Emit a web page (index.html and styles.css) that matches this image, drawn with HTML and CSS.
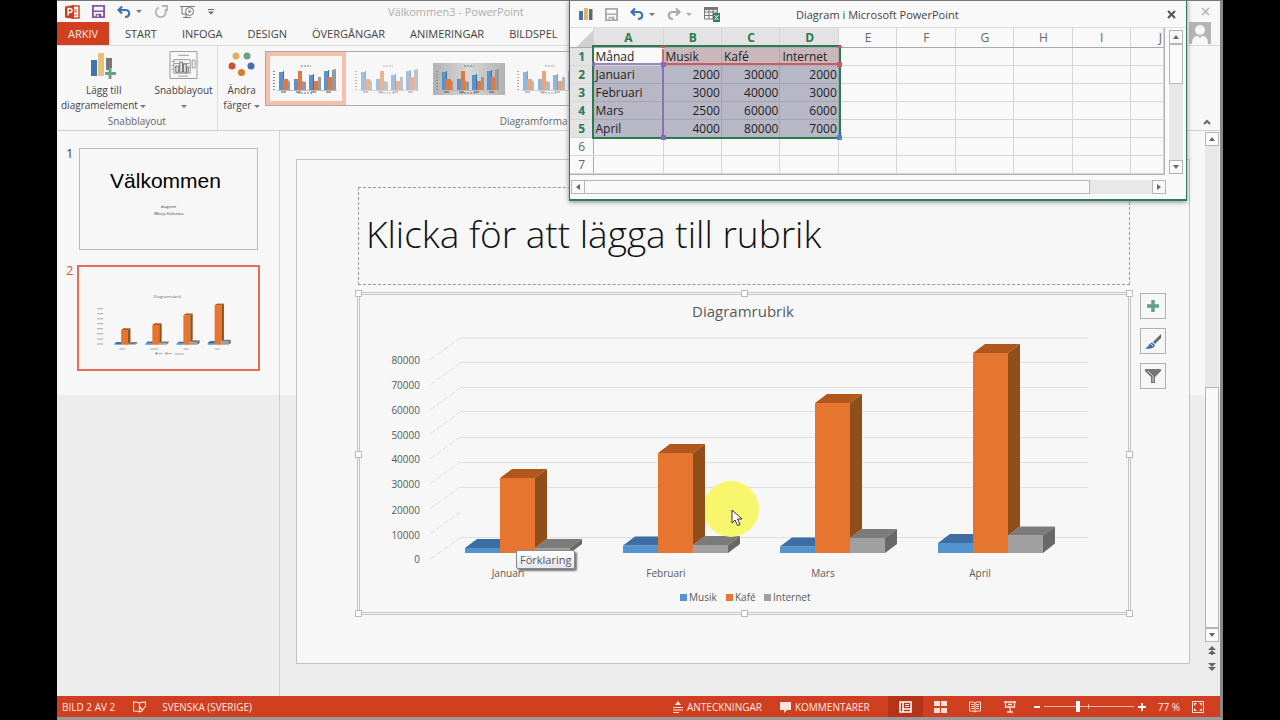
FILE: index.html
```html
<!DOCTYPE html>
<html lang="sv">
<head>
<meta charset="utf-8">
<title>Välkommen3 - PowerPoint</title>
<link rel="stylesheet" href="styles.css">
</head>
<body>
<svg class="defs" aria-hidden="true">
  <symbol id="undo" viewBox="0 0 14 14"><path d="M5 1.500L1.500 5 5 8.500M2 5h6.500c5 0 5 7-.5 7" fill="none" stroke="currentColor" stroke-width="2.200"/></symbol>
  <symbol id="save" viewBox="0 0 14 14"><path d="M1 1h12v12H1z" fill="none" stroke="currentColor" stroke-width="2"/><path d="M1 6h12v1.500H1zM4 9.500h6V13H4z" fill="currentColor"/><path d="M5.500 10.500h1.500V13H5.500z" fill="#f7f7f7"/></symbol>
  <symbol id="minichart" viewBox="0 0 72 32">
    <path d="M31 3h10M28 30h15" stroke="#777" stroke-dasharray="2 1"/><path d="M4 8v19" stroke="#888" stroke-width="2" stroke-dasharray="1 2"/>
    <path d="M7 27.500h60" stroke="#bbb"/>
    <path class="c1" d="M9 9h4v18H9zM24 16h4v11h-4zM39 12h4v15h-4zM54 8h4v19h-4z"/>
    <path class="d1" d="M13 8h1v19h-1zM28 15h1v12h-1zM43 11h1v16h-1zM58 7h1v20h-1z"/>
    <path class="c2" d="M13 16h5v11h-5zM28 8h4v19h-4zM44 18h4v9h-4zM58 14h4v13h-4z"/>
    <path class="c3" d="M18 17l2 2v8h-2zM32 18l4 1v8h-4zM48 14h3v13h-3zM62 7l4-1v21h-4z"/>
    <path d="M11 29h5M26 29h5M41 29h5M56 29h5" stroke="#555"/>
  </symbol>
  <symbol id="chartbars" viewBox="465 344 590 210">
    <g fill="#5294d0"><path d="M465 548h35v5h-35zM623 545.500h35v7.500h-35zM780 546.500h35v6.500h-35zM938 543h35v10h-35z"/></g>
    <g fill="#3c6da3"><path d="M465 548l12-9h35v9zM623 545.500l12-9h35v9zM780 546.500l12-9h35v9zM938 543l12-9h35v9z"/></g>
    <g fill="#a0a0a0"><path d="M535 548h35v5h-35zM693 545h35v8h-35zM850 538h35v15h-35zM1008 535.500h35v17.500h-35z"/></g>
    <g fill="#7b7b7b"><path d="M535 548l12-9h35l-12 9zM693 545l12-9h35l-12 9zM850 538l12-9h35l-12 9zM1008 535.500l12-9h35l-12 9z"/></g>
    <g fill="#686868"><path d="M570 548l12-9v5l-12 9zM728 545l12-9v8l-12 9zM885 538l12-9v15l-12 9zM1043 535.500l12-9v17l-12 9.500z"/></g>
    <g fill="#e6752f"><path d="M500 478h35v75h-35zM658 453h35v100h-35zM815 403h35v150h-35zM973 353h35v200h-35z"/></g>
    <g fill="#b1571c"><path d="M500 478l12-9h35l-12 9zM658 453l12-9h35l-12 9zM815 403l12-9h35l-12 9zM973 353l12-9h35l-12 9z"/></g>
    <g fill="#904f1a"><path d="M535 478l12-9v70l-12 9zM693 453l12-9v92l-12 9zM850 403l12-9v135l-12 9zM1008 353l12-9v182.500l-12 9z"/></g>
  </symbol>
</svg>

<div class="app">
  <header class="titlebar">
    <div class="quick">
      <svg width="16" height="16" viewBox="0 0 16 16"><path d="M9 2h6v12H9z" fill="#fff" stroke="#cf4527" stroke-width="1.500"/><path d="M10 6h3M10 8h3M10 11h3" stroke="#cf4527"/><path d="M1 2.500L10 1v14L1 13.500z" fill="#cf3d1e"/><path d="M4.200 11.500V4.500h1.500c3 0 3 4 0 4H4.500" fill="none" stroke="#fff" stroke-width="1.500"/></svg>
      <button aria-label="Spara" class="purple"><svg width="13" height="13"><use href="#save"/></svg></button>
      <button aria-label="Ångra" class="blue"><svg width="14" height="14"><use href="#undo"/></svg><i class="caret"></i></button>
      <button aria-label="Gör om"><svg width="14" height="14" viewBox="0 0 14 14"><path d="M5 2.500a5 5 0 1 0 6 2M8 1h5v5" fill="none" stroke="#b3b3b3" stroke-width="1.800"/></svg></button>
      <button aria-label="Starta bildspel"><svg width="16" height="14" viewBox="0 0 16 14"><path d="M0 1.500h15M2 2v7h5M6 9v3.500M3 12.500h8" fill="none" stroke="#777"/><circle cx="9.500" cy="6.500" r="4" fill="#f7f7f7" stroke="#777"/><path d="M8.500 4.500v4l3-2z" fill="#6c9b88"/></svg></button>
      <button aria-label="Anpassa"><svg width="6" height="6" viewBox="0 0 6 6"><path d="M0 .5h6" stroke="#666"/><path d="M0 2.500h6L3 5.500z" fill="#666"/></svg></button>
    </div>
    <h1>Välkommen3 - PowerPoint</h1>
    <button class="close" aria-label="Stäng"><svg width="9" height="9" viewBox="0 0 9 9"><path d="M1 1l7 7M8 1L1 8" stroke="#b5b5b5" stroke-width="1.600"/></svg></button>
  </header>

  <nav class="tabs">
    <button class="file">ARKIV</button>
    <button>START</button><button>INFOGA</button><button>DESIGN</button><button>ÖVERGÅNGAR</button><button>ANIMERINGAR</button><button>BILDSPEL</button>
    <svg class="avatar" width="22" height="22" viewBox="0 0 22 22"><path d="M0 0h22v22H0z" fill="#b4b4b4"/><circle cx="11" cy="8" r="5" fill="#f7f7f7"/><path d="M3 22c0-7 3-8 6-8l2 2 2-2c3 0 6 1 6 8z" fill="#f7f7f7"/></svg>
  </nav>

  <section class="ribbon">
    <div class="group">
      <div class="tools">
        <button class="tool">
          <svg width="27" height="28" viewBox="0 0 27 28"><path d="M1 9h6v16H1z" fill="#4273b1"/><path d="M8 2h6v23H8z" fill="#e6c27a"/><path d="M16 7h6v10h-2v2h-4z" fill="#777"/><path d="M20 17v11M15 22.500h11" stroke="#6aa288" stroke-width="3"/></svg>
          <span>Lägg till<br>diagramelement <i class="caret"></i></span>
        </button>
        <button class="tool">
          <svg width="29" height="28" viewBox="0 0 29 29"><path d="M.5.500h28v28H.500zM4.500 9h17v14h-17zM23.500 9.500h3v8h-3z" fill="#f7f7f7" stroke="#999"/><path d="M9 4.500h11M9 26h10M2 11h2M2 15h2M2 19h2M5 13h16M5 17h16" stroke="#999"/><path d="M6.500 15.500h3V22h-3zM10.500 11.500h3V22h-3zM14.500 13.500h3V22h-3zM17.500 16.500h2V22h-2z" fill="#ddd" stroke="#777"/></svg>
          <span>Snabblayout<br><i class="caret"></i></span>
        </button>
      </div>
      <div class="caption">Snabblayout</div>
    </div>
    <div class="group styles">
      <div class="tools">
        <button class="tool">
          <svg width="27" height="28" viewBox="0 0 27 28"><circle cx="8" cy="5" r="3.500" fill="#deb060"/><circle cx="19" cy="5" r="3.500" fill="#6aa28c"/><circle cx="4" cy="15" r="3.500" fill="#cc5036"/><circle cx="23" cy="15" r="3.500" fill="#446fac"/><circle cx="13.500" cy="21.500" r="3.500" fill="#dd762e"/></svg>
          <span>Ändra<br>färger <i class="caret"></i></span>
        </button>
        <div class="gallery">
          <button class="selected" aria-label="Format 1"><svg width="72" height="32"><use href="#minichart"/></svg></button>
          <button class="light" aria-label="Format 2"><svg width="72" height="32"><use href="#minichart"/></svg></button>
          <button class="gray" aria-label="Format 3"><svg width="72" height="32"><use href="#minichart"/></svg></button>
          <button class="pale" aria-label="Format 4"><svg width="72" height="32"><use href="#minichart"/></svg></button>
        </div>
      </div>
      <div class="caption">Diagramforma</div>
    </div>
    <button class="collapse" aria-label="Komprimera menyfliksområdet"><svg width="8" height="6" viewBox="0 0 8 6"><path d="M1 5l3-3 3 3" fill="none" stroke="#666" stroke-width="2"/></svg></button>
  </section>

  <main class="work">
    <aside class="slides">
      <div class="item"><span>1</span>
        <div class="thumb"><strong>Välkommen</strong><small>diagram</small><small>/Marja Källenius</small></div>
      </div>
      <div class="item active"><span>2</span>
        <div class="thumb">
          <svg viewBox="0 0 178 100">
            <use href="#chartbars" x="35" y="36" width="116" height="42"/>
            <path d="M21 41v40" stroke="#aaa" stroke-width="6" stroke-dasharray="1 4"/>
            <path d="M40 81.500h6M71 81.500h8M104 81.500h5M135 81.500h5M95 86.500h9" stroke="#aaa"/>
            <path d="M76 85h2v2h-2z" fill="#5294d0"/><path d="M86 85h2v2h-2z" fill="#e6752f"/><path d="M79 86h4M89 86h3" stroke="#aaa"/>
            <text x="88" y="31" text-anchor="middle">Diagramrubrik</text>
          </svg>
        </div>
      </div>
    </aside>

    <div class="canvas">
      <article class="slide">
        <h2>Klicka för att lägga till rubrik</h2>
        <div class="chart">
          <svg viewBox="358 293 772 321" role="img" aria-label="Diagramrubrik">
            <path d="M460 338h628M460 362.500h628M460 387.500h628M460 411.500h628M460 437.500h628M460 462.500h628M460 487.500h628M460 537.500h628" stroke="#dedede"/>
            <path d="M430 360l30-22M430 385l30-22M430 410l30-22M430 434l30-22M430 459l30-22M430 484l30-22M430 509l30-22M430 534l30-22M430 559l30-21" stroke="#dcdcdc" stroke-dasharray="6 2"/>
            <use href="#chartbars" x="465" y="344" width="590" height="210"/>
            <text class="title" x="743" y="317" text-anchor="middle">Diagramrubrik</text>
            <g class="axis" text-anchor="end">
              <text x="420" y="364">80000</text><text x="420" y="389">70000</text><text x="420" y="414">60000</text><text x="420" y="439">50000</text><text x="420" y="463">40000</text><text x="420" y="488">30000</text><text x="420" y="514">20000</text><text x="420" y="539">10000</text><text x="420" y="563">0</text>
            </g>
            <g class="axis" text-anchor="middle">
              <text x="508" y="577">Januari</text><text x="666" y="577">Februari</text><text x="823" y="577">Mars</text><text x="980" y="577">April</text>
            </g>
            <path d="M680 594h7v7h-7z" fill="#5294d0"/><path d="M726 594h7v7h-7z" fill="#e6752f"/><path d="M764 594h7v7h-7z" fill="#a0a0a0"/>
            <g class="axis"><text x="689" y="601">Musik</text><text x="735" y="601">Kafé</text><text x="773" y="601">Internet</text></g>
          </svg>
          <i class="handle nw"></i><i class="handle n"></i><i class="handle ne"></i><i class="handle w"></i><i class="handle e"></i><i class="handle sw"></i><i class="handle s"></i><i class="handle se"></i>
          <div class="tip" role="tooltip">Förklaring</div>
          <div class="spot"></div>
          <svg class="pointer" width="12" height="18" viewBox="0 0 12 18"><path d="M1 1v13l3-3 2.500 5.500 2.500-1L6.500 10H11z" fill="#fff" stroke="#333"/></svg>
          <div class="side">
            <button aria-label="Diagramelement"><svg width="14" height="14" viewBox="0 0 14 14"><path d="M7 1v12M1 7h12" stroke="#62a184" stroke-width="3.500"/></svg></button>
            <button aria-label="Diagramformat"><svg width="18" height="17" viewBox="0 0 18 17"><path d="M17 1v4l-6 6-2-2z" fill="#686868"/><path d="M8 9.500l3 2.500c-1 4-6 4-10 3.500 3-1 4-5 7-6z" fill="#3f72b0"/><path d="M7 11l2 2" stroke="#fff"/></svg></button>
            <button aria-label="Diagramfilter"><svg width="18" height="16" viewBox="0 0 18 16"><path d="M1 1h16v2l-6 6v6H7V9L1 3z" fill="#777"/><path d="M4 3l5 5v6" stroke="#ccc" fill="none"/></svg></button>
          </div>
        </div>
      </article>
    </div>

    <div class="vscroll">
      <button aria-label="Upp"><i class="up"></i></button>
      <div class="track"><div class="knob"></div></div>
      <button aria-label="Ned"><i class="down"></i></button>
      <button class="bare" aria-label="Föregående bild"><svg width="8" height="9" viewBox="0 0 8 9"><path d="M0 4l4-4 4 4zM0 8l4-4 4 4zM3 8h2v1H3z" fill="#666"/></svg></button>
      <button class="bare" aria-label="Nästa bild"><svg width="8" height="9" viewBox="0 0 8 9"><path d="M0 1h8L4 5zM0 5h8L4 9z" fill="#666"/></svg></button>
    </div>
  </main>

  <footer class="status">
    <span>BILD 2 AV 2</span>
    <svg width="14" height="12" viewBox="0 0 14 12"><path d="M6.500 10.500V2C5 1 3 1 .5 1v9c3 0 5 0 6 1 1-1 2-1 3-1M6.500 2c1.500-1 3-1 6-1v3M7 6l2.500 3L13 4.500" fill="none" stroke="#fbe3dc" stroke-width="1.200"/></svg>
    <span class="lang">SVENSKA (SVERIGE)</span>
    <button class="notes"><svg width="10" height="12" viewBox="0 0 10 12"><path d="M2 4l3-4 3 4zM0 6h10v1H0zM0 8.500h10v1H0zM0 11h6v1H0z" fill="#fbe3dc"/></svg>ANTECKNINGAR</button>
    <button class="comments"><svg width="11" height="12" viewBox="0 0 11 12"><path d="M0 1h11v8H7l-3 3V9H0z" fill="#fbe3dc"/></svg>KOMMENTARER</button>
    <div class="views">
      <button class="on" aria-label="Normal"><svg width="13" height="12" viewBox="0 0 13 12"><path d="M1 1h11v10H1zM4 1v10M4 8h8" fill="none" stroke="#fff" stroke-width="1.500"/><path d="M6 3.500h4M6 5.500h4" stroke="#fff"/></svg></button>
      <button aria-label="Bildsortering"><svg width="13" height="12" viewBox="0 0 13 12"><path d="M0 0h6v5H0zM7 0h6v5H7zM0 7h6v5H0zM7 7h6v5H7z" fill="#fbe3dc"/></svg></button>
      <button aria-label="Läsvy"><svg width="12" height="12" viewBox="0 0 12 12"><path d="M6 2v9M.500 1C3 1 5 1 6 2c1-1 3-1 5.500-1v9C9 10 7 10 6 11 5 10 3 10 .500 10zM2 3.500h3M2 5.500h3M2 7.500h3M7 3.500h3M7 5.500h3M7 7.500h3" fill="none" stroke="#fbe3dc"/></svg></button>
      <button aria-label="Bildspel"><svg width="12" height="12" viewBox="0 0 12 12"><path d="M0 1h12M1.500 1v5h9V1M6 6v5M3 11h6M4 3.500h4" fill="none" stroke="#fbe3dc" stroke-width="1.300"/></svg></button>
    </div>
    <div class="zoom">
      <button aria-label="Zooma ut"><svg width="6" height="10" viewBox="0 0 6 10"><path d="M0 5h6" stroke="#fff" stroke-width="2"/></svg></button>
      <input type="range" min="0" max="100" value="38" aria-label="Zoom">
      <button aria-label="Zooma in"><svg width="8" height="10" viewBox="0 0 8 10"><path d="M0 5h8M4 1v8" stroke="#fff" stroke-width="1.800"/></svg></button>
    </div>
    <span>77 %</span>
    <button aria-label="Anpassa till fönster"><svg width="12" height="12" viewBox="0 0 12 12"><path d="M.5.500h11v11H.500z" fill="none" stroke="#fbe3dc"/><path d="M2 5V2h3zM7 2h3v3zM2 7v3h3zM10 7v3H7z" fill="#fbe3dc"/></svg></button>
  </footer>
</div>

<section class="sheet" aria-label="Diagram i Microsoft PowerPoint">
  <header>
    <svg width="14" height="14" viewBox="0 0 14 14"><path d="M0 4h4v9H0z" fill="#4273b1"/><path d="M5 1h4v12H5z" fill="#deb566"/><path d="M10 2h3.500v11H10z" fill="#666"/></svg>
    <button aria-label="Spara" class="dim"><svg width="13" height="13"><use href="#save"/></svg></button>
    <button aria-label="Ångra" class="blue"><svg width="14" height="14"><use href="#undo"/></svg><i class="caret"></i></button>
    <button aria-label="Gör om" class="dim"><svg class="flip" width="14" height="14"><use href="#undo"/></svg><i class="caret"></i></button>
    <button aria-label="Redigera data i Excel"><svg width="16" height="15" viewBox="0 0 16 15"><path d="M.500 1h13v11H.500zM.500 5h13M.500 8.500h13M5 2v10M9 2v10" fill="none" stroke="#777"/><path d="M0 0h14v3H0z" fill="#777"/><path d="M9 6h7v9H9z" fill="#2d8659"/><path d="M10.500 8l4 5M14.500 8l-4 5" stroke="#fff"/></svg></button>
    <h2>Diagram i Microsoft PowerPoint</h2>
    <button class="close" aria-label="Stäng"><svg width="9" height="9" viewBox="0 0 9 9"><path d="M1 1l7 7M8 1L1 8" stroke="#555" stroke-width="2"/></svg></button>
  </header>
  <div class="grid">
    <div class="cells">
      <table>
        <colgroup><col class="rowhead"><col class="first"><col><col><col><col><col><col><col><col><col class="last"></colgroup>
        <thead><tr><th class="corner"></th><th class="hot">A</th><th class="hot">B</th><th class="hot">C</th><th class="hot">D</th><th>E</th><th>F</th><th>G</th><th>H</th><th>I</th><th class="cut">J</th></tr></thead>
        <tbody>
          <tr><th class="hot">1</th><td>Månad</td><td class="ser">Musik</td><td class="ser">Kafé</td><td class="ser">Internet</td><td></td><td></td><td></td><td></td><td></td><td></td></tr>
          <tr><th class="hot">2</th><td class="sel">Januari</td><td class="sel num">2000</td><td class="sel num">30000</td><td class="sel num">2000</td><td></td><td></td><td></td><td></td><td></td><td></td></tr>
          <tr><th class="hot">3</th><td class="sel">Februari</td><td class="sel num">3000</td><td class="sel num">40000</td><td class="sel num">3000</td><td></td><td></td><td></td><td></td><td></td><td></td></tr>
          <tr><th class="hot">4</th><td class="sel">Mars</td><td class="sel num">2500</td><td class="sel num">60000</td><td class="sel num">6000</td><td></td><td></td><td></td><td></td><td></td><td></td></tr>
          <tr><th class="hot">5</th><td class="sel">April</td><td class="sel num">4000</td><td class="sel num">80000</td><td class="sel num">7000</td><td></td><td></td><td></td><td></td><td></td><td></td></tr>
          <tr><th>6</th><td></td><td></td><td></td><td></td><td></td><td></td><td></td><td></td><td></td><td></td></tr>
          <tr><th>7</th><td></td><td></td><td></td><td></td><td></td><td></td><td></td><td></td><td></td><td></td></tr>
        </tbody>
      </table>
      <svg class="marks" width="252" height="98" viewBox="590 43 252 98">
        <path d="M593 46h247v92H593z" fill="none" stroke="#2c7a50" stroke-width="2"/>
        <path d="M594 64h69v73" fill="none" stroke="#7f5fb0" stroke-width="1.500"/>
        <path d="M663 49v15h176" fill="none" stroke="#c2424e" stroke-width="1.500"/>
        <path d="M661 46h4v2h-4zM837 46h5v2h-5zM837 62h5v5h-5z" fill="#dd5363"/>
        <path d="M661 62h5v5h-5zM661 135h5v5h-5zM592 62h3v4h-3z" fill="#8a68c0"/><path d="M837 135h5v5h-5z" fill="#4f82d4"/>
      </svg>
    </div>
    <div class="sv">
      <button aria-label="Upp"><i class="up"></i></button>
      <div class="track"><div class="knob"></div></div>
      <button aria-label="Ned"><i class="down"></i></button>
    </div>
  </div>
  <div class="sh">
    <button aria-label="Vänster"><i class="left"></i></button>
    <div class="track"><div class="knob"></div></div>
    <button aria-label="Höger"><i class="right"></i></button>
  </div>
</section>
</body>
</html>
```
FILE: styles.css
```css
* { box-sizing: border-box; }
body { margin: 0; position: relative; min-height: 100vh; padding: 0 57px; background: #000; color: #444; font-family: "Open Sans", "Noto Sans", sans-serif; font-size: 11px; }
button { margin: 0; padding: 0; border: 0; background: none; color: inherit; font: inherit; }
h1, h2 { margin: 0; font-weight: 400; }
svg { display: block; }
.defs { position: absolute; width: 0; height: 0; }
.app { display: flex; flex-direction: column; min-height: 100vh; background: #f7f7f7; border-top: 1px solid #777; border-bottom: 3px solid #999; border-right: 3px solid #888; }
.caret { display: inline-block; border: 3px solid transparent; border-top-color: #777; border-bottom: 0; vertical-align: middle; }

.titlebar { display: flex; align-items: center; height: 21px; padding-right: 10px; }
.quick { display: flex; align-items: center; gap: 12px; width: 331px; padding-left: 7px; }
.quick button, .sheet header button { display: flex; align-items: center; gap: 5px; }
.purple { color: #8455a3; }
.blue { color: #3e71ae; }
.dim { color: #aaa; }
.dim .caret { border-top-color: #aaa; }
.titlebar h1 { flex: 1; color: #adadad; font-size: 11px; }

.tabs { display: flex; align-items: stretch; gap: 25px; height: 24px; border-bottom: 1px solid #d9d9d9; font-size: 11px; }
.tabs .file { width: 52px; margin-right: -9px; background: #d04020; color: #fbe8e2; }
.avatar { margin-left: auto; margin-right: 9px; }

.ribbon { position: relative; display: flex; height: 85px; border-bottom: 1px solid #cfcfcf; font-size: 10px; line-height: 15px; }
.group { display: flex; flex-direction: column; justify-content: space-between; padding: 5px 4px 1px; border-right: 1px solid #ddd; }
.tools { display: flex; gap: 8px; }
.tool { display: flex; flex-direction: column; align-items: center; gap: 4px; white-space: nowrap; }
.caption { text-align: center; color: #666; }
.styles { flex: 1; border: 0; }
.styles .tools { gap: 3px; }
.styles .tool { width: 40px; }
.styles .caption { padding-left: 278px; text-align: left; }
.gallery { flex: 1; display: flex; gap: 3px; height: 55px; margin-right: 93px; overflow: hidden; border: 1px solid #aaa; border-right: 0; }
.gallery button { display: grid; place-items: center; flex: none; width: 78px; }
.gallery .selected { width: 80px; border: 4px solid #f4bfab; }
.gallery .gray svg { background: linear-gradient(90deg, #b2b2b2, #d8d8d8, #b2b2b2); }
.c1 { fill: #5b92cb; } .d1 { fill: #3f6ea3; } .c2 { fill: #e07840; } .c3 { fill: #999; }
.light svg { opacity: 0.55; }
.pale svg { opacity: 0.65; }
.collapse { position: absolute; right: 9px; bottom: 5px; }

.work { flex: 1; display: flex; background: linear-gradient(#f7f7f7 264px, #ededed 264px); }
.slides { width: 223px; padding: 17px 21px 0 9px; border-right: 1px solid #d2d2d2; display: flex; flex-direction: column; gap: 15px; }
.item { display: flex; gap: 5px; font-size: 13px; line-height: 10px; }
.item > span { width: 8px; }
.thumb { flex: 1; display: flex; flex-direction: column; align-items: center; height: 102px; border: 1px solid #bbb; background: #f7f7f7; color: #333; }
.thumb strong { margin: 20px 0 10px; padding-right: 6px; font: 400 21px/24px "Liberation Sans", sans-serif; color: #000; }
.thumb small { font-size: 4px; line-height: 7px; }
.active { color: #dd5a3c; gap: 3px; margin-right: -2px; }
.active .thumb { height: 106px; border: 2px solid #e86c52; }
.thumb svg { width: 100%; }
.thumb text { font-size: 4px; fill: #666; }

.canvas { flex: 1; padding: 28px 15px 32px 16px; }
.slide { padding: 27px 59px 49px 61px; border: 1px solid #c4c4c4; background: #f7f7f7; }
.slide h2 { margin-bottom: 8px; padding: 0 7px 4px; border: 1px dashed #999; color: #111; font: 300 37px/92px "Open Sans", sans-serif; white-space: nowrap; }
.chart { position: relative; outline: 3px double #c4c4c4; outline-offset: -2px; }
.chart > svg:first-child { width: 100%; }
.title { font-size: 15px; fill: #595959; }
.axis { font-size: 10px; fill: #595959; }
.handle { position: absolute; width: 7px; height: 7px; margin: -3px; border: 1px solid #bbb; background: #fff; }
.nw, .n, .ne { top: 0; } .sw, .s, .se { bottom: 0; } .w, .e { top: 50%; }
.nw, .w, .sw { left: 0; } .ne, .e, .se { right: 0; } .n, .s { left: 50%; }
.tip { position: absolute; left: 158px; top: 257px; padding: 0 3px; border: 1px solid #888; border-radius: 2px; background: linear-gradient(#fff, #e6e6f0); box-shadow: 2px 2px 2px #777; font-size: 11px; line-height: 17px; color: #555; }
.spot { position: absolute; left: 345px; top: 188px; width: 56px; height: 56px; border-radius: 50%; background: #f8f66c; clip-path: path("M2 0H56V56H0V54H2Z"); }
.pointer { position: absolute; left: 373px; top: 216px; }
.side { position: absolute; right: -36px; top: 0; display: grid; gap: 9px; }
.side button { display: grid; place-items: center; width: 26px; height: 26px; border: 1px solid #b0b0b0; }

.vscroll, .sv { display: flex; flex-direction: column; }
.vscroll { width: 14px; margin-right: 1px; padding: 1px 0 22px; }
.vscroll button, .sv button, .sh button { display: grid; place-items: center; height: 14px; border: 1px solid #b5b5b5; background: #fafafa; }
.vscroll .bare { height: 16px; border: 0; background: none; }
.track { flex: 1; display: flex; flex-direction: column; background: #e8e8e8; }
.knob { border: 1px solid #b5b5b5; background: #f9f9f9; }
.vscroll .knob { height: 50%; margin-top: auto; }
.up, .down, .left, .right { border: 3px solid transparent; }
.up { border-top: 0; border-bottom: 4px solid #666; }
.down { border-bottom: 0; border-top: 4px solid #666; }
.left { border-left: 0; border-right: 4px solid #666; }
.right { border-right: 0; border-left: 4px solid #666; }

.status { display: flex; align-items: center; height: 21px; padding: 0 16px 0 5px; background: #d04020; color: #fbe8e2; font-size: 10px; white-space: nowrap; }
.status .lang { margin-left: 15px; }
.status span + svg { margin-left: 18px; }
.status button { display: flex; align-items: center; gap: 4px; }
.status .notes { margin-left: auto; margin-right: 18px; }
.views { display: flex; align-self: stretch; margin-left: 18px; }
.views button { justify-content: center; width: 35px; }
.views .on { background: #b53317; }
.zoom { display: flex; align-items: center; gap: 4px; margin: 0 12px 0 6px; }
.zoom input { appearance: none; width: 90px; height: 12px; margin: 0; background: linear-gradient(#f3b9a8, #f3b9a8) 50% 50% / 1px 5px no-repeat, linear-gradient(#f3b9a8, #f3b9a8) center / 100% 1px no-repeat; }
.zoom input::-webkit-slider-thumb { appearance: none; width: 4px; height: 11px; background: #fff; }
.status > span:last-of-type { margin-right: 12px; }

.sheet { position: absolute; top: 0; right: 93px; width: 618px; border: 1px solid #2f7d57; border-top-color: #777; border-bottom-width: 2px; background: #f9f9f9; box-shadow: 0 1px 5px #888; }
.sheet header { display: flex; align-items: center; gap: 12px; height: 27px; padding: 0 10px 0 9px; border-bottom: 1px solid #ddd; }
.sheet h2 { flex: 1; padding-left: 64px; font-size: 11px; }
.flip { transform: scaleX(-1); }
.grid { display: flex; gap: 4px; padding-right: 3px; }
.cells { position: relative; flex: 1; height: 147px; border-right: 1px solid #b0b0b0; border-bottom: 1px solid #b0b0b0; }
table { width: 100%; height: 100%; table-layout: fixed; border-collapse: collapse; color: #222; font-size: 12px; line-height: 16px; }
thead { height: 19px; }
.rowhead { width: 23px; } .first { width: 70px; } .last { width: 33px; }
th, td { padding: 1px 1px 0 2px; border: 1px solid #d6d6d6; overflow: hidden; white-space: nowrap; }
th { color: #666; font-weight: 400; border-left: 0; text-align: center; }
thead th { height: 19px; padding-top: 2px; border-top: 0; border-bottom-color: #aaa; }
tbody th { border-right-color: #aaa; }
.hot { background: #e2e3e2; color: #2c7a50; font-weight: 700; }
.cut { text-align: right; }
.corner { background: linear-gradient(135deg, transparent 60%, #d0d0d0 60%); }
.ser { background: #c8b8bb; border-color: #b8a8ab; }
.sel { background: #b7b7c5; border-color: #a5a5b0; }
.num { text-align: right; }
.marks { position: absolute; left: 20px; top: 15px; }
.sv { width: 14px; padding: 2px 0 1px; }
.sv .knob { height: 40px; }
.sh { display: flex; height: 24px; padding: 5px 20px 5px 1px; }
.sh button { width: 14px; }
.sh .track { flex-direction: row; }
.sh .knob { width: 89%; border-left: 0; }
```
